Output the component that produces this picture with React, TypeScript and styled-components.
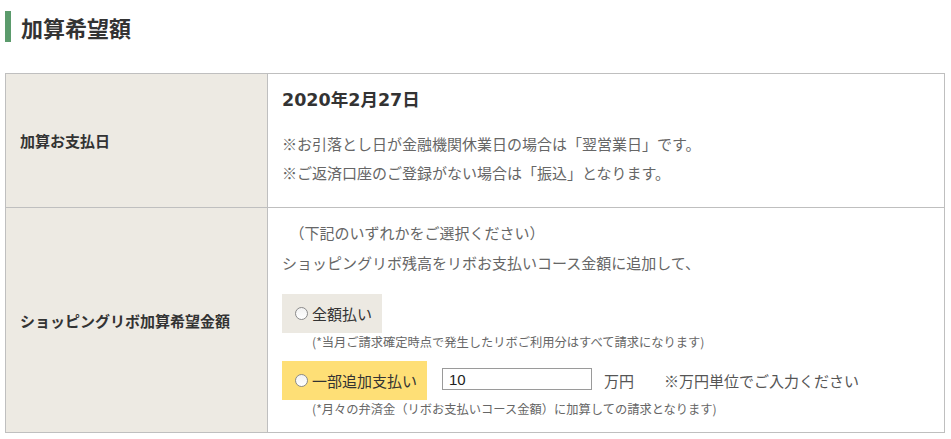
import React from "react";
import styled, { createGlobalStyle } from "styled-components";

const GlobalStyle = createGlobalStyle`
  body {
    margin: 0;
    background: #fff;
    font-family: "Noto Sans CJK JP", "DejaVu Sans", sans-serif;
    color: #333;
  }
`;

interface OptionProps {
  label: string;
  highlight?: boolean;
}

const PayOption = (props: OptionProps) => {
  return (
    <OptionBox $highlight={props.highlight}>
      <Radio type="radio" name="kasan" />
      <OptionLabel>{props.label}</OptionLabel>
    </OptionBox>
  );
};

const App = () => {
  return (
    <Page>
      <GlobalStyle />
      <Heading>加算希望額</Heading>

      <FormGrid>
        <LabelCell>加算お支払日</LabelCell>
        <ValueCell $top={12} $bottom={20}>
          <DateText>2020年2月27日</DateText>
          <NoteList>
            <Note>※お引落とし日が金融機関休業日の場合は「翌営業日」です。</Note>
            <Note>※ご返済口座のご登録がない場合は「振込」となります。</Note>
          </NoteList>
        </ValueCell>

        <LabelCell>ショッピングリボ加算希望金額</LabelCell>
        <ValueCell $top={10} $bottom={14}>
          <Lead>　（下記のいずれかをご選択ください）</Lead>
          <Lead>ショッピングリボ残高をリボお支払いコース金額に追加して、</Lead>

          <OptionRow $gap={16}>
            <PayOption label="全額払い" />
          </OptionRow>
          <SubNote>(*当月ご請求確定時点で発生したリボご利用分はすべて請求になります)</SubNote>

          <OptionRow $gap={10}>
            <PayOption label="一部追加支払い" highlight />
            <AmountInput type="text" defaultValue="10" />
            <Unit>万円</Unit>
            <Hint>※万円単位でご入力ください</Hint>
          </OptionRow>
          <SubNote>(*月々の弁済金（リボお支払いコース金額）に加算しての請求となります)</SubNote>
        </ValueCell>
      </FormGrid>
    </Page>
  );
};

const Page = styled.div`
  padding: 11px 6px 0 5px;
`;

const Heading = styled.h2`
  margin: 0;
  height: 31px;
  display: flex;
  align-items: center;
  border-left: 6px solid #5b9b6c;
  padding-left: 10px;
  font-size: 22px;
  font-weight: bold;
  color: #333;
`;

const FormGrid = styled.div`
  margin-top: 31px;
  display: grid;
  grid-template-columns: 262px 1fr;
  border-top: 1px solid #bfbfbf;
  border-left: 1px solid #bfbfbf;
`;

const LabelCell = styled.div`
  box-sizing: border-box;
  display: flex;
  align-items: center;
  padding-left: 14px;
  background: #edeae3;
  border-right: 1px solid #bfbfbf;
  border-bottom: 1px solid #bfbfbf;
  font-size: 15px;
  font-weight: bold;
  color: #333;
`;

const ValueCell = styled.div<{ $top: number; $bottom: number }>`
  box-sizing: border-box;
  padding: ${(p) => p.$top}px 14px ${(p) => p.$bottom}px 14px;
  border-right: 1px solid #bfbfbf;
  border-bottom: 1px solid #bfbfbf;
`;

const DateText = styled.div`
  font-family: "DejaVu Sans", "Noto Sans CJK JP", sans-serif;
  font-size: 17.5px;
  font-weight: bold;
  line-height: 28px;
  color: #333;
`;

const NoteList = styled.div`
  margin-top: 16px;
`;

const Note = styled.div`
  font-size: 15px;
  line-height: 28.5px;
  color: #666;
`;

const Lead = styled.div`
  font-size: 15px;
  line-height: 30px;
  color: #666;
`;

const OptionRow = styled.div<{ $gap: number }>`
  margin-top: ${(p) => p.$gap}px;
  display: flex;
  align-items: center;
`;

const OptionBox = styled.label<{ $highlight?: boolean }>`
  box-sizing: border-box;
  height: 39px;
  display: inline-flex;
  align-items: center;
  padding: 0 10px 0 13px;
  background: ${(p) => (p.$highlight ? "#fedf76" : "#ece9e2")};
  cursor: pointer;
`;

const Radio = styled.input`
  appearance: none;
  margin: 0 4px 0 0;
  width: 13px;
  height: 13px;
  border-radius: 50%;
  border: 1px solid #8a8a8a;
  background: linear-gradient(#f2f2f2, #ffffff);
  box-sizing: border-box;
`;

const OptionLabel = styled.span`
  font-size: 15px;
  line-height: 21px;
  color: #333;
`;

const SubNote = styled.div`
  padding-left: 30px;
  font-size: 12.25px;
  line-height: 18px;
  color: #666;
`;

const AmountInput = styled.input`
  box-sizing: border-box;
  margin: 0 0 3px 15px;
  width: 150px;
  height: 22px;
  padding: 0 6px;
  border: 1px solid #9a9a9a;
  font-family: "Liberation Sans", sans-serif;
  font-size: 15px;
  color: #222;
  outline: none;
`;

const Unit = styled.span`
  margin-left: 12px;
  font-size: 15px;
  color: #555;
`;

const Hint = styled.span`
  margin-left: 30px;
  font-size: 15px;
  color: #555;
`;

export default App;
